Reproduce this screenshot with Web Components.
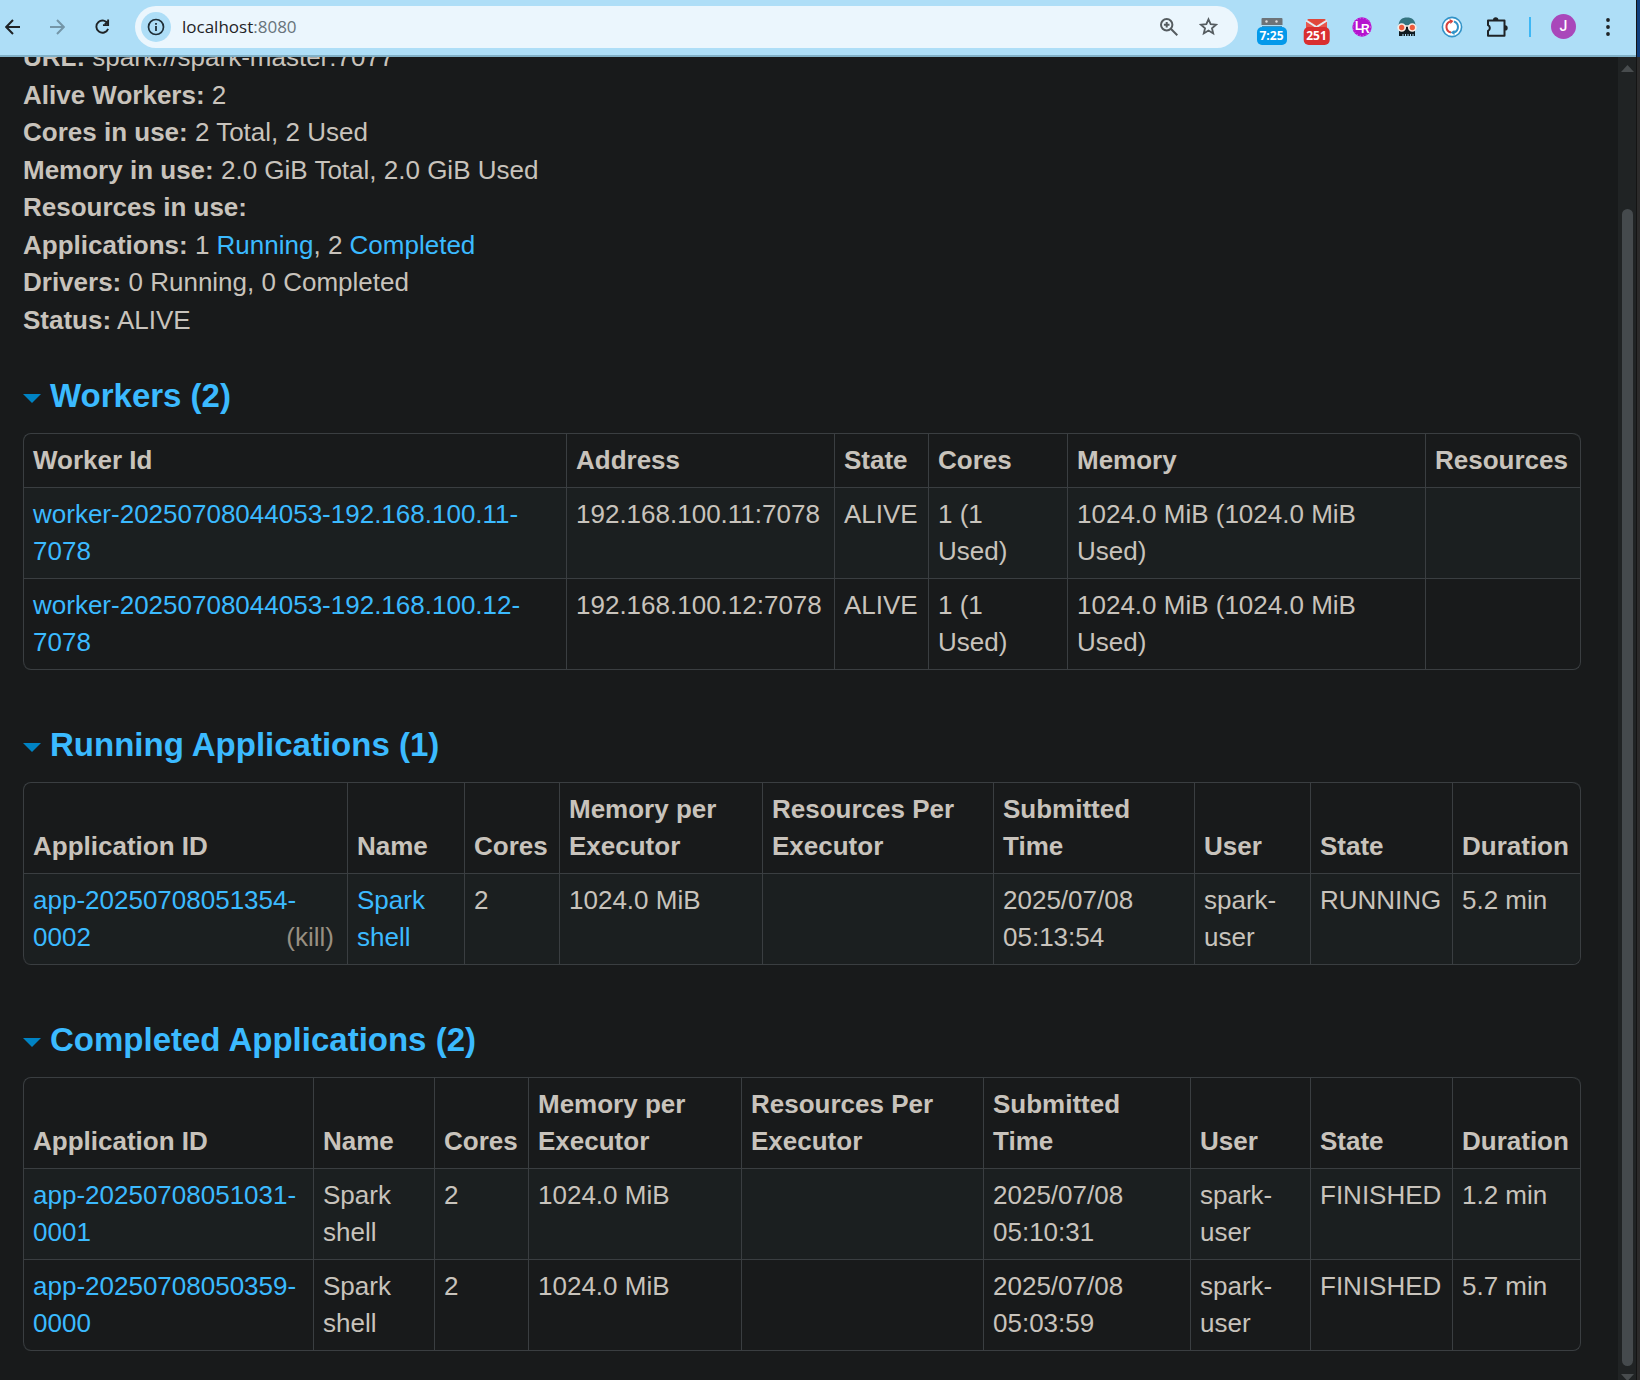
<!DOCTYPE html>
<html lang="en">
<head>
<meta charset="utf-8">
<title>Spark Master</title>
<style>
html, body { margin: 0; height: 100%; background: #181a1b; }
body { overflow: hidden; font-family: "Liberation Sans", Arial, sans-serif; }
</style>
</head>
<body>
<browser-window>
  <browser-toolbar slot="toolbar"></browser-toolbar>
  <master-summary></master-summary>
  <page-section heading="Workers (2)"><workers-table></workers-table></page-section>
  <page-section heading="Running Applications (1)"><running-table></running-table></page-section>
  <page-section heading="Completed Applications (2)"><completed-table></completed-table></page-section>
</browser-window>

<script>
class BaseElement extends HTMLElement {
  constructor() {
    super();
    this.attachShadow({ mode: "open" }).innerHTML = this.render();
  }
  render() { return ""; }
}

class BrowserWindow extends BaseElement {
  render() {
    return `<style>
      :host { display: flex; height: 100vh; background: #181a1b; }
      .window { flex: 1; min-width: 0; display: flex; flex-direction: column; }
      .view { flex: 1; min-height: 0; display: flex; }
      main { flex: 1; min-width: 0; overflow: hidden; padding: 0 37px 0 23px; }
      .desktop { width: 3px; border-left: 1px solid #141414; background: linear-gradient(#123f7d 57px, #2c2b2b 57px); }
    </style>
    <div class="window">
      <slot name="toolbar"></slot>
      <div class="view"><main><slot></slot></main><scroll-rail></scroll-rail></div>
    </div>
    <div class="desktop"></div>`;
  }
}

class ScrollRail extends BaseElement {
  render() {
    return `<style>
      :host { display: flex; flex-direction: column; align-items: center; width: 18px; background: #202324; box-sizing: border-box; padding-top: 8px; }
      svg { display: block; flex: none; }
      .space { flex: 137 0 0; }
      .thumb { flex: 1157 0 0; width: 11px; border-radius: 6px; background: #454a4d; }
      .down { margin-top: 8px; }
    </style>
    <svg width="13" height="7"><path d="M0 7 6.500 0 13 7z" fill="#484c4e"/></svg>
    <div class="space"></div><div class="thumb"></div>
    <svg class="down" width="13" height="6"><path d="M0 0h13L6.500 7z" fill="#484c4e"/></svg>`;
  }
}

class BrowserToolbar extends BaseElement {
  render() {
    return `<style>
      :host { display: flex; align-items: center; height: 57px; box-sizing: border-box; padding: 0 13px 2px 5px; background: #aedef7; border-bottom: 2px solid #81b1c8; color: #1f2326; font-family: "Open Sans", "Noto Sans", sans-serif; }
      button { display: flex; align-items: center; justify-content: center; margin: 0; padding: 0; border: 0; background: none; color: inherit; font: inherit; }
      svg { display: block; }
      .nav { display: flex; gap: 30px; margin-right: 25px; }
      .nav button { width: 15px; }
      .nav button:disabled { color: #7496a8; }
      .omnibox { flex: 1; min-width: 0; height: 42px; display: flex; align-items: center; border-radius: 21px; background: #ebf6fd; box-sizing: border-box; padding: 0 20px 0 6px; }
      .info { width: 30px; height: 30px; border-radius: 15px; background: #aedef7; }
      .address { flex: 1; padding-left: 11px; font-size: 17px; line-height: 24px; color: #1f2326; }
      .port { color: #68747b; }
      .tools { display: flex; gap: 21px; color: #555c60; }
      .extensions { display: flex; margin-left: 11px; }
      .extensions button { width: 45px; height: 42px; position: relative; }
      .badge { position: absolute; top: 21px; left: 50%; transform: translateX(-50%); height: 18px; border-radius: 5px; padding: 0 3px; font-size: 12px; line-height: 18px; font-weight: 700; color: #fff; }
      .timer { background: #0499ea; }
      .mail { background: #d92f2f; }
      .rule { width: 2px; height: 20px; margin: 0 20px 0 10px; background: #3db7f5; }
      .avatar { width: 25px; height: 25px; border-radius: 13px; background: #a947ba; color: #fff; font: 500 14px/25px Roboto, sans-serif; margin-right: 17px; }
      .menu { width: 30px; height: 30px; }
    </style>
    <div class="nav">
      <button aria-label="Back"><svg width="15" height="16" viewBox="0 0 15 16" fill="none" stroke="currentColor" stroke-width="2"><path d="M15 8H1.500M8 1 1.200 8 8 15"/></svg></button>
      <button aria-label="Forward" disabled><svg width="15" height="16" viewBox="0 0 15 16" fill="none" stroke="currentColor" stroke-width="2"><path d="M0 8h13.500M7 1l6.800 7L7 15"/></svg></button>
      <button aria-label="Reload"><svg width="16" height="16" viewBox="0 0 16 16" fill="none" stroke="currentColor" stroke-width="2"><path d="M13.800 4.800A6.500 6.500 0 1 0 14 10"/><path d="M14 0v6H8.500M10.500 5 14 2"/></svg></button>
    </div>
    <div class="omnibox">
      <button class="info" aria-label="Site information"><svg width="18" height="18" viewBox="0 0 18 18"><circle cx="9" cy="9" r="7.500" fill="none" stroke="#1f2f38" stroke-width="1.700"/><path d="M8.100 8h1.800v5H8.100zM8.100 5h1.800v1.800H8.100z" fill="#1f2f38"/></svg></button>
      <div class="address">localhost<span class="port">:8080</span></div>
      <div class="tools">
        <button aria-label="Zoom"><svg width="18" height="18" viewBox="0 0 18 18" fill="none" stroke="currentColor" stroke-width="2"><circle cx="6.700" cy="6.700" r="5.700"/><path d="m10.800 10.800 6.500 6.500M6.700 3.900v5.600M3.900 6.700h5.600"/></svg></button>
        <button aria-label="Bookmark this page"><svg width="19" height="19" viewBox="0 0 19 19" fill="none" stroke="currentColor" stroke-width="1.800"><path d="m9.500 2.300 2.150 4.900 5.350.5-4.050 3.500 1.250 5.200-4.700-2.800-4.700 2.800 1.250-5.200L2 7.700l5.350-.5z"/></svg></button>
      </div>
    </div>
    <div class="extensions">
      <button aria-label="Timer extension">
        <svg width="45" height="42" viewBox="0 0 45 42"><path d="M13.500 12h19a1 1 0 0 1 1 1v6h-21v-6a1 1 0 0 1 1-1z" fill="#6d7378"/><path d="M13 20h20v2H13z" fill="#3f8fb8"/><circle cx="17.500" cy="15.500" r="1.200" fill="#ddd"/><circle cx="27.500" cy="15.500" r="1.200" fill="#ddd"/></svg>
        <span class="badge timer">7:25</span></button>
      <button aria-label="Mail extension">
        <svg width="45" height="42" viewBox="0 0 45 42"><path d="M12 14h21v8H12z" fill="#e8574d"/><path d="M12 14.500 22.500 21 33 14.500" fill="none" stroke="#e4eef4" stroke-width="2"/><path d="M13 13h19l-9.500 6.500z" fill="#e0473b"/></svg>
        <span class="badge mail">251</span></button>
      <button aria-label="LR extension">
        <svg width="20" height="20" viewBox="0 0 20 20"><circle cx="10" cy="10" r="9.700" fill="#b413cf"/><circle cx="10" cy="10" r="8.800" fill="none" stroke="#d875e6" stroke-width="1" stroke-dasharray="1 2"/><text x="3" y="13" font-family="Liberation Sans" font-weight="700" font-size="12" fill="#fff">L</text><text x="9" y="16" font-family="Liberation Sans" font-weight="700" font-size="12" fill="#fff">R</text></svg></button>
      <button aria-label="Skull extension">
        <svg width="20" height="20" viewBox="0 0 20 20"><path d="M1.500 9C1.500 3 5 .5 10 .5S18.500 3 18.500 9z" fill="#347480"/><path d="M2 9h16v10h-1.500v-2h-1v2H14v-2h-1v2h-1.500v-2h-1v2H9v-2H8v2H6.500v-2h-1v2H2z" fill="#111b20"/><circle cx="4.700" cy="10.500" r="3.500" fill="#ef5b3c" stroke="#f6eee8" stroke-width="1.700"/><circle cx="15.300" cy="10.500" r="3.500" fill="#ef5b3c" stroke="#f6eee8" stroke-width="1.700"/><path d="M8 9h4" stroke="#f6eee8" stroke-width="1.500"/></svg></button>
      <button aria-label="Sync extension">
        <svg width="22" height="22" viewBox="0 0 22 22"><circle cx="11" cy="11" r="9.600" fill="#fff" stroke="#3293c8" stroke-width="1.600"/><path d="M10 16.500A5.800 5.800 0 0 1 9 5.500" fill="none" stroke="#d6413b" stroke-width="2"/><path d="m8.500 3 4 2-3 3z" fill="#d6413b"/><path d="M13 5.500a5.800 5.800 0 0 1 0 11" fill="none" stroke="#3293c8" stroke-width="2"/><path d="m13.500 19-4-2.500 4-2.500z" fill="#3293c8"/></svg></button>
      <button aria-label="Extensions">
        <svg width="22" height="22" viewBox="0 0 22 22"><path d="M2 4.500h16.500v15.200H2v-4.700a3.200 3.200 0 0 0 0-5.800z" fill="none" stroke="currentColor" stroke-width="2" stroke-linejoin="round"/><path d="M7 4a2.700 2.700 0 0 1 5.400 0zM19 9.200a2.700 2.700 0 0 1 0 5.400z" fill="currentColor"/></svg></button>
    </div>
    <span class="rule"></span>
    <button class="avatar" aria-label="Profile">J</button>
    <button class="menu" aria-label="Menu"><svg width="4" height="18" viewBox="0 0 4 18" fill="currentColor"><circle cx="2" cy="2" r="1.900"/><circle cx="2" cy="9" r="1.900"/><circle cx="2" cy="16" r="1.900"/></svg></button>`;
  }
}

class MasterSummary extends BaseElement {
  render() {
    return `<style>
      :host { display: block; margin-top: -18px; color: #c8c3bc; font-size: 26px; line-height: 37px; }
      ul { list-style: none; margin: 0; padding: 0; height: 300px; display: flex; flex-direction: column; justify-content: space-between; }
      a { color: #3bbaff; text-decoration: none; }
    </style>
    <ul>
      <li><strong>URL:</strong> spark://spark-master:7077</li>
      <li><strong>Alive Workers:</strong> 2</li>
      <li><strong>Cores in use:</strong> 2 Total, 2 Used</li>
      <li><strong>Memory in use:</strong> 2.0 GiB Total, 2.0 GiB Used</li>
      <li><strong>Resources in use:</strong></li>
      <li><strong>Applications:</strong> 1 <a href="#running">Running</a>, 2 <a href="#completed">Completed</a></li>
      <li><strong>Drivers:</strong> 0 Running, 0 Completed</li>
      <li><strong>Status:</strong> ALIVE</li>
    </ul>`;
  }
}

class PageSection extends HTMLElement {
  connectedCallback() {
    if (this.shadowRoot) return;
    this.attachShadow({ mode: "open" }).innerHTML = `<style>
      :host { display: block; margin-top: 56px; }
      :host(:first-of-type) { margin-top: 38px; }
      h4 { margin: 0 0 19px; font-size: 33px; line-height: 37px; font-weight: 700; }
      a { color: #3bbaff; text-decoration: none; }
      .caret { display: inline-block; vertical-align: middle; margin-right: 9px; border: 9px solid transparent; border-top-color: #0083c4; border-bottom: 0; }
    </style>
    <h4><a href="#"><span class="caret"></span><span class="title"></span></a></h4>
    <slot></slot>`;
    this.shadowRoot.querySelector(".title").textContent = this.getAttribute("heading");
  }
}

class DataTable extends BaseElement {
  get columns() { return []; }
  get rows() { return []; }
  render() {
    const cols = this.columns.map(([, w]) => `<col${w ? ` style="width:${w}px"` : ""}>`).join("");
    const head = this.columns.map(([name]) => `<th scope="col">${name}</th>`).join("");
    const body = this.rows.map(r => `<tr>${r.map(c => `<td>${c}</td>`).join("")}</tr>`).join("");
    return `<style>
      :host { display: block; color: #c8c3bc; font-size: 26px; line-height: 37px; }
      table { width: 100%; table-layout: fixed; border-collapse: separate; border-spacing: 0; border: 1px solid #3a3e41; border-left: 0; border-top: 0; border-radius: 8px; }
      th, td { padding: 8px 9px; border-left: 1px solid #3a3e41; border-top: 1px solid #3a3e41; text-align: left; }
      th { vertical-align: bottom; font-weight: 700; }
      td { vertical-align: top; }
      th:first-child { border-top-left-radius: 8px; }
      th:last-child { border-top-right-radius: 8px; }
      tbody tr:last-child td:first-child { border-bottom-left-radius: 8px; }
      tbody tr:last-child td:last-child { border-bottom-right-radius: 8px; }
      tbody tr:nth-child(odd) td { background: #1b1f20; }
      a { color: #3bbaff; text-decoration: none; }
      a.kill { float: right; margin-right: 4px; color: #988f81; }
    </style>
    <table><colgroup>${cols}</colgroup><thead><tr>${head}</tr></thead><tbody>${body}</tbody></table>`;
  }
}

class WorkersTable extends DataTable {
  get columns() {
    return [["Worker Id"], ["Address", 268], ["State", 94], ["Cores", 139], ["Memory", 358], ["Resources", 155]];
  }
  get rows() {
    return [11, 12].map(n => [
      `<a href="#">worker-20250708044053-192.168.100.${n}-7078</a>`,
      `192.168.100.${n}:7078`, "ALIVE", "1 (1 Used)", "1024.0 MiB (1024.0 MiB Used)", ""
    ]);
  }
}

class RunningTable extends DataTable {
  get columns() {
    return [["Application ID"], ["Name", 117], ["Cores", 95], ["Memory per Executor", 203], ["Resources Per Executor", 231],
      ["Submitted Time", 201], ["User", 116], ["State", 142], ["Duration", 128]];
  }
  get rows() {
    return [[`<a href="#"><span>app-20250708051354-</span><wbr><span>0002</span></a> <a class="kill" href="#">(kill)</a>`, `<a href="#">Spark shell</a>`,
      "2", "1024.0 MiB", "", "2025/07/08 05:13:54", "spark-user", "RUNNING", "5.2 min"]];
  }
}

class CompletedTable extends DataTable {
  get columns() {
    return [["Application ID"], ["Name", 121], ["Cores", 94], ["Memory per Executor", 213], ["Resources Per Executor", 242],
      ["Submitted Time", 207], ["User", 120], ["State", 142], ["Duration", 128]];
  }
  get rows() {
    return [["app-20250708051031-0001", "05:10:31", "1.2 min"], ["app-20250708050359-0000", "05:03:59", "5.7 min"]].map(([id, time, duration]) => [
      `<a href="#">${id}</a>`, "Spark shell", "2", "1024.0 MiB", "", `2025/07/08 ${time}`, "spark-user", "FINISHED", duration
    ]);
  }
}

customElements.define("scroll-rail", ScrollRail);
customElements.define("browser-toolbar", BrowserToolbar);
customElements.define("master-summary", MasterSummary);
customElements.define("workers-table", WorkersTable);
customElements.define("running-table", RunningTable);
customElements.define("completed-table", CompletedTable);
customElements.define("page-section", PageSection);
customElements.define("browser-window", BrowserWindow);
</script>
</body>
</html>
